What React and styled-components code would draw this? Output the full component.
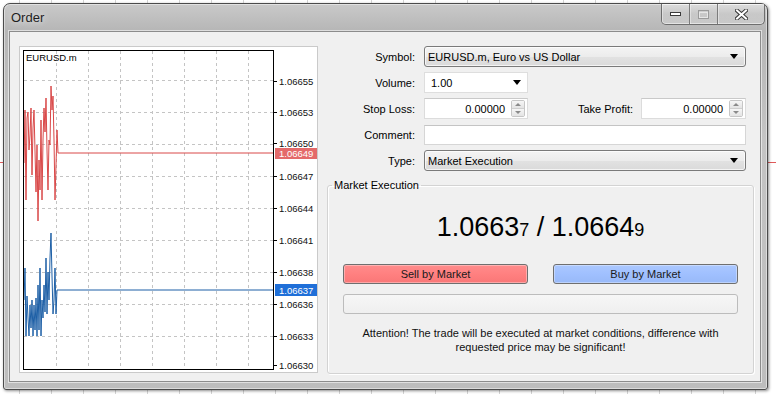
import React from 'react';
import styled, { createGlobalStyle } from 'styled-components';

const GlobalStyle = createGlobalStyle`
  html, body { margin: 0; padding: 0; }
  body {
    width: 776px;
    height: 394px;
    overflow: hidden;
    font-family: "Liberation Sans", Arial, sans-serif;
    font-size: 11px;
    color: #000;
    background-color: #fff;
    background-image:
      linear-gradient(to bottom, transparent 162px, #e05a5a 162px, #e05a5a 163px, transparent 163px),
      repeating-linear-gradient(to right, transparent 0, transparent 19px, #d4d4d4 19px, #d4d4d4 20px, transparent 20px, transparent 32px);
  }
  #root { padding: 3px 0 0 3px; }
`;

const Window = styled.div`
  box-sizing: border-box;
  width: 765px;
  height: 387px;
  border: 1px solid #4b4b4b;
  border-radius: 7px 7px 3px 3px;
  background: linear-gradient(180deg, #c9c9c9 0%, #b6b6b6 7%, #c4c4c4 35%, #bdbdbd 100%);
  box-shadow: inset 0 0 0 1px rgba(255, 255, 255, 0.45), 1px 1px 3px rgba(0, 0, 0, 0.45);
  display: flex;
  flex-direction: column;
`;

const TitleBar = styled.div`
  flex: none;
  height: 27px;
  display: flex;
  align-items: flex-start;
  padding-left: 7px;
`;

const Title = styled.div`
  font-family: "Liberation Sans", Arial, sans-serif;
  font-size: 13px;
  color: #1e1e1e;
  padding-top: 6px;
  text-shadow: 0 0 7px rgba(255, 255, 255, 0.9);
`;

const CaptionGroup = styled.div`
  margin-left: auto;
  margin-right: 2px;
  display: flex;
  height: 20px;
  border: 1px solid #6e6e6e;
  border-top: none;
  border-radius: 0 0 5px 5px;
  overflow: hidden;
  box-shadow: inset 0 -1px 0 rgba(255, 255, 255, 0.5);
`;

const CaptionButton = styled.div`
  box-sizing: border-box;
  width: ${(p) => p.$w}px;
  height: 100%;
  display: flex;
  align-items: center;
  justify-content: center;
  background: linear-gradient(180deg, rgba(255,255,255,0.35), rgba(255,255,255,0.1) 50%, rgba(255,255,255,0.2));
  border-left: ${(p) => (p.$first ? 'none' : '1px solid #7c7c7c')};
  box-shadow: inset 1px 1px 0 rgba(255, 255, 255, 0.4);
`;

const Client = styled.div`
  box-sizing: border-box;
  flex: 1;
  margin: 0 6px 7px 5px;
  background: #f0f0f0;
  border: 1px solid #8c8c8c;
  box-shadow: 0 0 0 1px rgba(255, 255, 255, 0.55);
  display: flex;
  align-items: flex-start;
  gap: 9px;
  padding: 14px 0 0 9px;
`;

const ChartFrame = styled.div`
  box-sizing: border-box;
  width: 299px;
  height: 327px;
  flex: none;
  border: 1px solid #cacaca;
  background: #fff;
  svg { display: block; }
`;

const RightPanel = styled.div`
  width: 427px;
  display: flex;
  flex-direction: column;
`;

const Form = styled.div`
  display: grid;
  grid-template-columns: 88px 322px;
  grid-auto-rows: 21px;
  column-gap: 9px;
  row-gap: 5px;
  align-items: center;
`;

const Label = styled.div`
  text-align: right;
  white-space: nowrap;
`;

const Select = styled.div`
  box-sizing: border-box;
  width: ${(p) => (p.$w ? `${p.$w}px` : '100%')};
  height: 21px;
  display: flex;
  align-items: center;
  padding-left: ${(p) => (p.$edit ? 6 : 3)}px;
  border: 1px solid ${(p) => (p.$edit ? '#dedede' : '#7a7a7a')};
  border-radius: ${(p) => (p.$edit ? 0 : 3)}px;
  background: ${(p) =>
    p.$edit ? '#fff' : 'linear-gradient(180deg, #f4f4f4 0%, #ececec 50%, #e2e2e2 51%, #dadada 100%)'};
  box-shadow: ${(p) => (p.$edit ? 'none' : 'inset 0 0 0 1px rgba(255,255,255,0.7)')};
`;

const Arrow = styled.span`
  margin-left: auto;
  margin-right: ${(p) => p.$mr || 7}px;
  width: 0;
  height: 0;
  border-left: 4px solid transparent;
  border-right: 4px solid transparent;
  border-top: 5px solid #000;
`;

const FieldRow = styled.div`
  display: flex;
  align-items: center;
  height: 21px;
`;

const SpinBox = styled.div`
  box-sizing: border-box;
  width: ${(p) => p.$w}px;
  height: 21px;
  display: flex;
  align-items: center;
  background: #fff;
  border: 1px solid #dcdcdc;
  border-top-color: #c9c9c9;
`;

const SpinValue = styled.div`
  flex: 1;
  text-align: right;
  padding-right: 6px;
`;

const Spinner = styled.div`
  box-sizing: border-box;
  width: 14px;
  height: 17px;
  margin-right: 2px;
  display: flex;
  flex-direction: column;
  border: 1px solid #c6c6c6;
  border-radius: 2px;
  overflow: hidden;
`;

const SpinHalf = styled.div`
  flex: 1;
  display: flex;
  align-items: center;
  justify-content: center;
  background: linear-gradient(180deg, #f6f6f6, #e4e4e4);
  border-top: ${(p) => (p.$down ? '1px solid #cfcfcf' : 'none')};
`;

const Tri = styled.span`
  width: 0;
  height: 0;
  border-left: 3px solid transparent;
  border-right: 3px solid transparent;
  ${(p) => (p.$down ? 'border-top: 3px solid #8a8a8a;' : 'border-bottom: 3px solid #8a8a8a;')}
`;

const TPLabel = styled.div`
  flex: 1;
  text-align: right;
  margin-right: 8px;
`;

const TextInput = styled.div`
  box-sizing: border-box;
  width: 100%;
  height: 20px;
  background: #fff;
  border: 1px solid #d6d6d6;
  border-top-color: #c4c4c4;
`;

const Group = styled.fieldset`
  box-sizing: border-box;
  width: 427px;
  height: 195px;
  margin: 8px 0 0 0;
  padding: 0 15px;
  border: 1px solid #d3d3d3;
  border-radius: 3px;
  box-shadow: inset 1px 1px 0 #fff, 1px 1px 0 #fff;
  display: flex;
  flex-direction: column;
  min-width: 0;
`;

const Legend = styled.legend`
  padding: 0 2px;
  margin-left: -11px;
  font-size: 11px;
`;

const Price = styled.div`
  margin-top: 20px;
  text-align: center;
  font-size: 27px;
  line-height: 32px;
  color: #000;
`;

const PriceSmall = styled.span`
  font-size: 18px;
`;

const ButtonRow = styled.div`
  margin-top: 18px;
  display: grid;
  grid-template-columns: 1fr 1fr;
  column-gap: 25px;
`;

const TradeButton = styled.div`
  box-sizing: border-box;
  height: 20px;
  display: flex;
  align-items: center;
  justify-content: center;
  border: 1px solid #6f6f6f;
  border-radius: 3px;
  color: #1a1a1a;
  background: ${(p) =>
    p.$kind === 'sell'
      ? 'linear-gradient(180deg, #ff8c8c 0%, #ff8080 50%, #f97777 100%)'
      : 'linear-gradient(180deg, #abc8ff 0%, #a0c0ff 50%, #98b9f8 100%)'};
  box-shadow: inset 0 0 0 1px rgba(255, 255, 255, 0.35);
`;

const StatusBar = styled.div`
  box-sizing: border-box;
  margin-top: 10px;
  height: 20px;
  border: 1px solid #bcbcbc;
  border-radius: 3px;
  background: linear-gradient(180deg, #f6f6f6, #efefef);
`;

const Notice = styled.div`
  margin-top: 12px;
  text-align: center;
  line-height: 14px;
  color: #111;
`;

const redPts = [
  [24,163],[25,110],[26,200],[27,118],[28,112],[29,150],[30,135],[31,108],[32,175],[33,128],[34,110],
  [36,192],[37,145],[38,221],[39,160],[40,190],[41,120],[42,200],[43,140],[44,108],[45,132],[46,98],
  [47,150],[48,190],[49,140],[50,145],[51,86],[52,110],[53,96],[54,140],[55,200],[56,165],[57,130],
  [58,153],[273,153],
];
const bluePts = [
  [24,300],[25,268],[26,336],[27,296],[28,318],[29,336],[30,305],[31,328],[32,300],[33,336],[34,305],
  [35,330],[36,298],[37,336],[38,285],[39,330],[40,268],[41,336],[42,300],[43,318],[44,285],[45,312],
  [46,258],[47,314],[48,272],[49,300],[50,258],[51,233],[52,276],[53,314],[54,300],[55,268],[56,314],
  [57,290],[58,290],[273,290],
];
const gridY = [80, 112, 144, 176, 208, 240, 272, 304, 336];
const gridX = [56, 88, 120, 152, 184, 216, 248];
const axis = [
  [81, '1.06655'], [112, '1.06653'], [143, '1.06650'], [176, '1.06647'], [208, '1.06644'],
  [240, '1.06641'], [272, '1.06638'], [304, '1.06636'], [336, '1.06633'], [365, '1.06630'],
];

const toStr = (pts) => pts.map((p) => p.join(',')).join(' ');

function Chart() {
  return (
    <svg width="297" height="325" viewBox="0 0 297 325">
      <g transform="translate(-20 -47)" fontFamily="Liberation Sans, Arial, sans-serif" fontSize="9.5">
        {gridY.map((y) => (
          <line key={`h${y}`} x1="24" x2="273" y1={y + 0.5} y2={y + 0.5} stroke="#c4c4c4" strokeDasharray="3 3" />
        ))}
        {gridX.map((x) => (
          <line key={`v${x}`} x1={x + 0.5} x2={x + 0.5} y1="51" y2="369" stroke="#c4c4c4" strokeDasharray="3 3" />
        ))}
        <polyline points={toStr(redPts)} fill="none" stroke="#d94848" strokeWidth="1" />
        <polyline points={toStr(bluePts)} fill="none" stroke="#1d5fa6" strokeWidth="1" />
        <rect x="23.5" y="50.5" width="250" height="319" fill="none" stroke="#000" />
        <text x="26" y="61" fill="#000">EURUSD.m</text>
        {axis.map(([y, t]) => (
          <g key={t}>
            <line x1="274" x2="277" y1={y + 0.5} y2={y + 0.5} stroke="#000" />
            <text x="279" y={y + 3.5} fill="#111">{t}</text>
          </g>
        ))}
        <rect x="275" y="148" width="42" height="11" fill="#e46a6a" />
        <text x="279" y="157" fill="#fff">1.06649</text>
        <rect x="275" y="284" width="42" height="12" fill="#1f6fd8" />
        <text x="279" y="293.5" fill="#fff">1.06637</text>
      </g>
    </svg>
  );
}

function SpinField({ w, value }) {
  return (
    <SpinBox $w={w}>
      <SpinValue>{value}</SpinValue>
      <Spinner>
        <SpinHalf><Tri /></SpinHalf>
        <SpinHalf $down><Tri $down /></SpinHalf>
      </Spinner>
    </SpinBox>
  );
}

export default function App() {
  return (
    <>
      <GlobalStyle />
      <Window>
        <TitleBar>
          <Title>Order</Title>
          <CaptionGroup>
            <CaptionButton $w={27} $first>
              <svg width="13" height="6" viewBox="0 0 13 6">
                <rect x="1.5" y="1.5" width="10" height="3" fill="#fff" stroke="#3a3a3a" />
              </svg>
            </CaptionButton>
            <CaptionButton $w={28}>
              <svg width="11" height="9" viewBox="0 0 11 9">
                <rect x="0.5" y="0.5" width="10" height="8" fill="none" stroke="#9a9a9a" />
                <rect x="1.5" y="2.5" width="8" height="5" fill="none" stroke="#e6e6e6" />
              </svg>
            </CaptionButton>
            <CaptionButton $w={47}>
              <svg width="13" height="11" viewBox="0 0 13 11">
                <path d="M2 1.5 L11 9.5 M11 1.5 L2 9.5" stroke="#3a3a3a" strokeWidth="4" strokeLinecap="square" />
                <path d="M2 1.5 L11 9.5 M11 1.5 L2 9.5" stroke="#fff" strokeWidth="2" strokeLinecap="square" />
              </svg>
            </CaptionButton>
          </CaptionGroup>
        </TitleBar>
        <Client>
          <ChartFrame>
            <Chart />
          </ChartFrame>
          <RightPanel>
            <Form>
              <Label>Symbol:</Label>
              <Select>
                EURUSD.m, Euro vs US Dollar
                <Arrow />
              </Select>
              <Label>Volume:</Label>
              <Select $edit $w={104}>
                1.00
                <Arrow $mr={6} />
              </Select>
              <Label>Stop Loss:</Label>
              <FieldRow>
                <SpinField w={104} value="0.00000" />
                <TPLabel>Take Profit:</TPLabel>
                <SpinField w={105} value="0.00000" />
              </FieldRow>
              <Label>Comment:</Label>
              <TextInput />
              <Label>Type:</Label>
              <Select>
                Market Execution
                <Arrow />
              </Select>
            </Form>
            <Group>
              <Legend>Market Execution</Legend>
              <Price>
                1.0663<PriceSmall>7</PriceSmall> / 1.0664<PriceSmall>9</PriceSmall>
              </Price>
              <ButtonRow>
                <TradeButton $kind="sell">Sell by Market</TradeButton>
                <TradeButton $kind="buy">Buy by Market</TradeButton>
              </ButtonRow>
              <StatusBar />
              <Notice>
                Attention! The trade will be executed at market conditions, difference with
                <br />
                requested price may be significant!
              </Notice>
            </Group>
          </RightPanel>
        </Client>
      </Window>
    </>
  );
}
